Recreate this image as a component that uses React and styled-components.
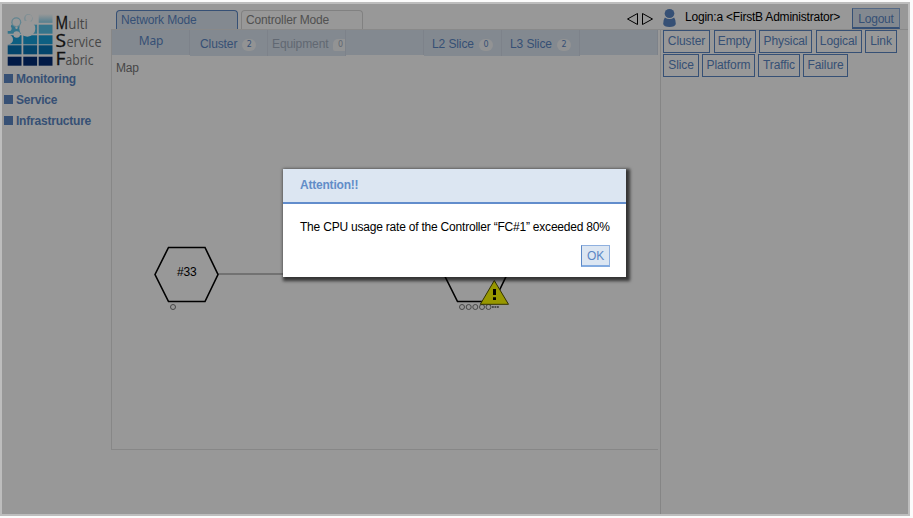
import React from "react";
import styled, { createGlobalStyle } from "styled-components";

const blue = "#5b87c5";
const pale = "#dce6f2";

const GlobalStyle = createGlobalStyle`
  * { box-sizing: border-box; }
  body { margin: 0; background: #fff; overflow: hidden; font: 12px/14px "Liberation Sans", Arial, sans-serif; letter-spacing: -0.21px; color: #000; }
  button { font: inherit; letter-spacing: inherit; }
`;

const Page = styled.div`
  position: relative;
  width: 913px;
  height: 518px;
  padding: 2px 3px 2px 0;
  background: #fbfbfb;
`;
const Frame = styled.div`
  position: relative;
  display: flex;
  width: 910px;
  height: 514px;
  border: 2px solid #bdbdbd;
`;
const Shell = styled.div`
  display: flex;
  flex: 1;
  background: #fff;
`;
const Sidebar = styled.aside`
  width: 109px;
  padding: 7px 0 0 4px;
`;
const Logo = styled.svg`
  display: block;
  width: 99px;
  height: 57px;
  overflow: visible;
  letter-spacing: 0;
`;
const MenuItem = styled.a`
  display: flex;
  align-items: center;
  height: 21px;
  margin-left: -2px;
  gap: 3px;
  color: ${blue};
  font-weight: bold;
  &::before { content: ""; width: 9px; height: 9px; background: ${blue}; }
`;
const Center = styled.main`
  width: 550px;
  display: flex;
  flex-direction: column;
`;
const ModeBar = styled.div`
  display: flex;
  align-items: flex-end;
  height: 26px;
  padding-left: 5px;
  gap: 3px;
  border-bottom: 1px solid #e6e6e6;
`;
const ModeTab = styled.div`
  width: 122px;
  height: 19px;
  padding: 2px 4px;
  letter-spacing: -0.15px;
  border: 1px solid ${(p) => (p.$active ? blue : "#d9d9d9")};
  border-bottom: 0;
  border-radius: 4px 4px 0 0;
  background: ${(p) => (p.$active ? pale : "#fff")};
  color: ${(p) => (p.$active ? blue : "#888")};
`;
const Pager = styled.svg`
  width: 28px;
  height: 14px;
  margin: 0 8px 3px auto;
`;
const MapPanel = styled.section`
  height: 420px;
  width: 547px;
  border: solid #e2e2e2;
  border-width: 0 0 1px 1px;
`;
const NavBar = styled.nav`
  display: flex;
  height: 25px;
  background: ${pale};
`;
const NavTab = styled.div`
  display: flex;
  align-items: center;
  gap: 5px;
  width: 78px;
  height: ${(p) => (p.$tall ? 26 : 25)}px;
  padding: 2px 0 0 ${(p) => p.$pad ?? 8}px;
  background: ${pale};
  border-right: 1px solid #d2dbe7;
  color: ${(p) => (p.$disabled ? "#a3afc0" : blue)};
  letter-spacing: -0.1px;
  white-space: nowrap;
  overflow: hidden;
`;
const MapTab = styled(NavTab)`
  padding: 0 0 4px 1px;
  justify-content: center;
  font: 12px/14px "Noto Sans", sans-serif;
`;
const Count = styled.span`
  display: flex;
  align-items: center;
  justify-content: center;
  flex: none;
  width: 14px;
  height: 12px;
  margin-top: 2px;
  border-radius: ${(p) => (p.$corner ? "5px 0 0 2px" : "6px")};
  background: #f5f6f8;
  font: 8px/12px "DejaVu Sans", sans-serif;
`;
const PanelTitle = styled.div`
  padding: 6px 4px 0;
  color: #777;
  height: 20px;
`;
const Topology = styled.svg`
  display: block;
  width: 545px;
  height: 370px;
  font: 12px "Liberation Sans", Arial, sans-serif;
`;
const Right = styled.aside`
  flex: 1;
  display: flex;
  flex-direction: column;
`;
const LoginBar = styled.div`
  display: flex;
  align-items: flex-start;
  height: 26px;
  padding: 4px 8px 0 2px;
  border-bottom: 1px solid #e6e6e6;
`;
const UserIcon = styled.svg`
  width: 13px;
  height: 18px;
  margin-top: 1px;
`;
const LoginName = styled.span`
  margin: 2px 0 0 9px;
  white-space: nowrap;
`;
const Button = styled.button`
  padding: 0;
  border: 1px solid #8fb0df;
  border-left-color: ${blue};
  border-bottom: 2px solid ${blue};
  background: ${pale};
  color: ${blue};
`;
const Logout = styled(Button)`
  width: 48px;
  height: 21px;
  margin-left: auto;
  padding-top: 2px;
`;
const Filters = styled.div`
  flex: 1;
  padding: 0 0 0 2px;
  border-left: 1px solid #e0e0e0;
  margin-left: -1px;
`;
const FilterRow = styled.div`
  display: flex;
  gap: ${(p) => p.$gap}px;
  margin-bottom: 1px;
`;
const Filter = styled.button`
  width: ${(p) => p.$w}px;
  height: 23px;
  padding: 0 0 1px;
  border: 1px solid ${blue};
  background: #fff;
  color: ${blue};
  letter-spacing: -0.1px;
`;
const Backdrop = styled.div`
  position: absolute;
  inset: 0;
  background: rgba(0, 0, 0, 0.405);
`;
const Dialog = styled.div`
  position: absolute;
  left: 283px;
  top: 169px;
  width: 343px;
  height: 108px;
  background: #fff;
  box-shadow: 2px 2px 3px 2px rgba(0, 0, 0, 0.65);
`;
const DialogHeader = styled.div`
  height: 35px;
  padding: 9px 17px;
  background: ${pale};
  border-bottom: 2px solid #628dcc;
  color: #628dc8;
  font-weight: bold;
`;
const DialogText = styled.p`
  margin: 16px 0 11px 17px;
  white-space: nowrap;
`;
const OkButton = styled(Button)`
  display: block;
  width: 29px;
  height: 22px;
  margin: 0 16px 0 auto;
  border-bottom-color: #83abe0;
`;

const columns = [1.7, 17.3, 32.7];
const rows = [
  [13.7, "#58c3ea"],
  [24.3, "#169fdb"],
  [34.3, "#0874b5"],
  [45.7, "#032c76"],
];
const logoWords = [
  ["M", "ulti", 18, 62.3, 19.5, 12.6],
  ["S", "ervice", 36, 60.5, 35, 10.5],
  ["F", "abric", 54, 59.5, 28, 10],
];

function BrandLogo() {
  return (
    <Logo viewBox="0 0 99 57">
      <defs>
        <linearGradient id="fade" x2="0" y2="1">
          <stop stopColor="#fff" />
          <stop offset="1" stopColor="#8dd6f0" />
        </linearGradient>
      </defs>
      <rect x="32.7" y="3" width="13.8" height="8.8" fill="url(#fade)" />
      {rows.map(([y, fill]) =>
        columns.map((x) => (
          <rect key={`${x}-${y}`} x={x} y={y} width="13.8" height="9" fill={fill} />
        ))
      )}
      <circle cx="10.3" cy="11.3" r="5" fill="#a4dff3" />
      <circle cx="22.3" cy="7.5" r="4.4" fill="#d5f0f9" />
      <g fill="#fff">
        <path d="M1 13H5.5L4 19H1Z" />
        <circle cx="10.3" cy="11.3" r="3.7" />
        <circle cx="22.8" cy="7" r="3.2" />
        <circle cx="21.3" cy="17.7" r="8" />
        <circle cx="3" cy="17.5" r="2.6" />
        <circle cx="2" cy="28.5" r="5" />
        <circle cx="10.7" cy="23.5" r="3.3" />
        <circle cx="10.5" cy="16.8" r="1.2" />
      </g>
      {logoWords.map(([cap, rest, y, x, w, capW]) => (
        <g key={cap} fontFamily="Open Sans, sans-serif">
          <text x="49.5" y={y} fontSize="19" fill="#1c1c1c" stroke="#1c1c1c" strokeWidth=".35" textLength={capW} lengthAdjust="spacingAndGlyphs">{cap}</text>
          <text x={x} y={y} fontSize="15" fill="#777" textLength={w} lengthAdjust="spacingAndGlyphs">{rest}</text>
        </g>
      ))}
    </Logo>
  );
}

function NetworkMap() {
  return (
    <Topology viewBox="112 75 545 370">
      <path d="M218 274H445" stroke="#aaa" strokeWidth="1.5" />
      <g fill="#fff" stroke="#000" strokeWidth="1.6">
        <path d="M155 274.5L168.5 247.5H205L218 274.5L205 301.5H168.5Z" />
        <path d="M444 274.5L457.5 301.5H494L507 274.5L494 247.5H457.5Z" />
      </g>
      <text x="177" y="276">#33</text>
      <g fill="none" stroke="#777">
        {[173, 462, 468.7, 475.3, 482, 488.5].map((x) => (
          <circle key={x} cx={x} cy="307" r="2.5" />
        ))}
      </g>
      <path d="M492 307H499" stroke="#555" strokeWidth="1.4" strokeDasharray="1.8 .7" />
      <path d="M494.3 280.5L508.5 304.3H480.3Z" fill="#ff0" stroke="#555500" />
      <path d="M493 289h3v6h-3zM493 297.3h3v2.7h-3z" fill="#000" />
    </Topology>
  );
}

export default function App() {
  return (
    <Page>
      <GlobalStyle />
      <Frame>
        <Shell>
          <Sidebar>
            <BrandLogo />
            <MenuItem>Monitoring</MenuItem>
            <MenuItem>Service</MenuItem>
            <MenuItem>Infrastructure</MenuItem>
          </Sidebar>
          <Center>
            <ModeBar>
              <ModeTab $active>Network Mode</ModeTab>
              <ModeTab>Controller Mode</ModeTab>
              <Pager viewBox="0 0 28 14" fill="none" stroke="#000">
                <path d="M12.5 1.5V12.5L2.5 7ZM17.5 1.5V12.5L27.5 7Z" />
              </Pager>
            </ModeBar>
            <MapPanel>
              <NavBar>
                <MapTab>Map</MapTab>
                <NavTab $tall $pad={10}>Cluster <Count>2</Count></NavTab>
                <NavTab $tall $disabled $pad={4}>Equipment<Count $corner>0</Count></NavTab>
                <NavTab />
                <NavTab $tall>L2 Slice <Count>0</Count></NavTab>
                <NavTab $tall>L3 Slice <Count>2</Count></NavTab>
                <NavTab />
              </NavBar>
              <PanelTitle>Map</PanelTitle>
              <NetworkMap />
            </MapPanel>
          </Center>
          <Right>
            <LoginBar>
              <UserIcon viewBox="0 0 14 18" preserveAspectRatio="none" fill={blue}>
                <ellipse cx="7" cy="4.5" rx="5.2" ry="4.5" />
                <path d="M2 8.5Q7 11.5 12 8.5Q14 11 13.8 15Q13 18 7 18Q1 18 .2 15Q0 11 2 8.5Z" />
              </UserIcon>
              <LoginName>Login:a &lt;FirstB Administrator&gt;</LoginName>
              <Logout>Logout</Logout>
            </LoginBar>
            <Filters>
              <FilterRow $gap={3.5}>
                <Filter $w={47}>Cluster</Filter>
                <Filter $w={42}>Empty</Filter>
                <Filter $w={53}>Physical</Filter>
                <Filter $w={46}>Logical</Filter>
                <Filter $w={32}>Link</Filter>
              </FilterRow>
              <FilterRow $gap={3}>
                <Filter $w={36}>Slice</Filter>
                <Filter $w={53}>Platform</Filter>
                <Filter $w={42}>Traffic</Filter>
                <Filter $w={45}>Failure</Filter>
              </FilterRow>
            </Filters>
          </Right>
        </Shell>
        <Backdrop />
      </Frame>
      <Dialog role="dialog">
        <DialogHeader>Attention!!</DialogHeader>
        <DialogText>The CPU usage rate of the Controller “FC#1” exceeded 80%</DialogText>
        <OkButton>OK</OkButton>
      </Dialog>
    </Page>
  );
}
